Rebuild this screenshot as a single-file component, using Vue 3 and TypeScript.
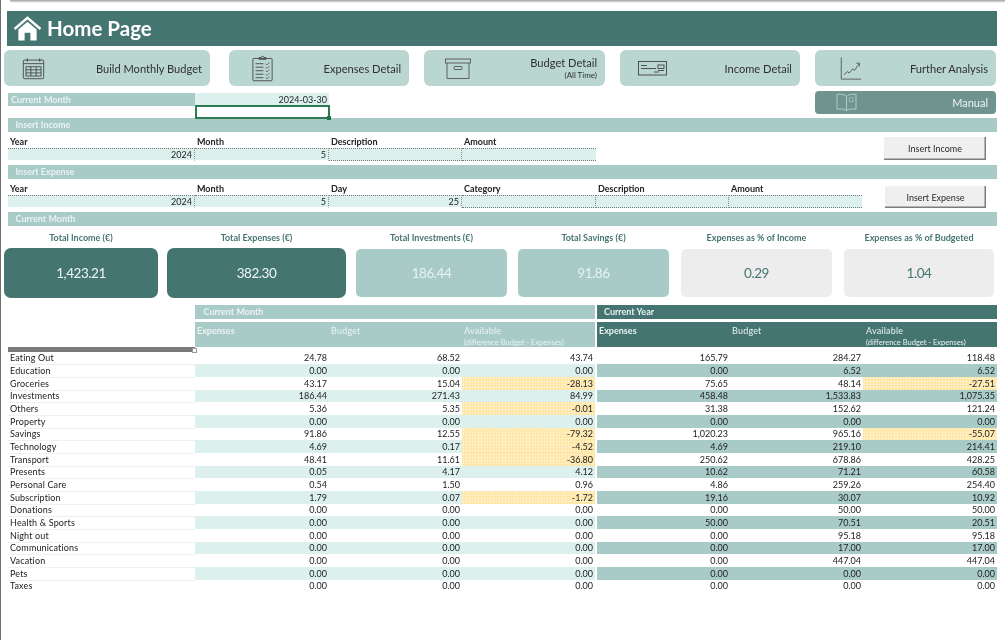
<script setup lang="ts">
interface Row { name: string; v: string[] }
const raw: [string, string][] = [
  ['Eating Out', '24.78 68.52 43.74 165.79 284.27 118.48'],
  ['Education', '0.00 0.00 0.00 0.00 6.52 6.52'],
  ['Groceries', '43.17 15.04 -28.13 75.65 48.14 -27.51'],
  ['Investments', '186.44 271.43 84.99 458.48 1,533.83 1,075.35'],
  ['Others', '5.36 5.35 -0.01 31.38 152.62 121.24'],
  ['Property', '0.00 0.00 0.00 0.00 0.00 0.00'],
  ['Savings', '91.86 12.55 -79.32 1,020.23 965.16 -55.07'],
  ['Technology', '4.69 0.17 -4.52 4.69 219.10 214.41'],
  ['Transport', '48.41 11.61 -36.80 250.62 678.86 428.25'],
  ['Presents', '0.05 4.17 4.12 10.62 71.21 60.58'],
  ['Personal Care', '0.54 1.50 0.96 4.86 259.26 254.40'],
  ['Subscription', '1.79 0.07 -1.72 19.16 30.07 10.92'],
  ['Donations', '0.00 0.00 0.00 0.00 50.00 50.00'],
  ['Health & Sports', '0.00 0.00 0.00 50.00 70.51 20.51'],
  ['Night out', '0.00 0.00 0.00 0.00 95.18 95.18'],
  ['Communications', '0.00 0.00 0.00 0.00 17.00 17.00'],
  ['Vacation', '0.00 0.00 0.00 0.00 447.04 447.04'],
  ['Pets', '0.00 0.00 0.00 0.00 0.00 0.00'],
  ['Taxes', '0.00 0.00 0.00 0.00 0.00 0.00'],
]
const rows: Row[] = raw.map(([name, s]) => ({ name, v: s.split(' ') }))

const kpis = [
  { label: 'Total Income (€)', value: '1,423.21', kind: 'dark', w: 154, gap: 9 },
  { label: 'Total Expenses (€)', value: '382.30', kind: 'dark', w: 179, gap: 10 },
  { label: 'Total Investments (€)', value: '186.44', kind: 'mid', w: 151, gap: 11 },
  { label: 'Total Savings (€)', value: '91.86', kind: 'mid', w: 151, gap: 12 },
  { label: 'Expenses as % of Income', value: '0.29', kind: 'grey', w: 151, gap: 12 },
  { label: 'Expenses as % of Budgeted', value: '1.04', kind: 'grey', w: 150, gap: 0 },
]

function cellClass(i: number, r: number, val: string): string[] {
  const c = ['num']
  if (i === 3) c.push('year-start')
  if (val.startsWith('-')) c.push('warn')
  else if (r % 2 === 1) c.push(i < 3 ? 'shade-light' : 'shade-mid')
  return c
}
</script>

<template>
  <div class="sheet">
    <header class="title">
      <svg class="house" viewBox="0 0 30 26" width="29" height="25">
        <path d="M1.500 13.500 15 2l13.500 11.500" fill="none" stroke="#fff" stroke-width="2.600" />
        <path d="M5.500 14 15 6l9.500 8v11.500h-6.500v-8h-6v8h-6.500z" fill="#fff" />
      </svg>
      <h1>Home Page</h1>
    </header>

    <nav class="nav">
      <div class="nbtn first">
        <svg class="ic" style="margin-left:18px" viewBox="0 0 26 26" width="23" height="23" fill="none" stroke="#444" stroke-width="1">
          <rect x="1.500" y="3.500" width="23" height="21" rx="1" />
          <path d="M1.500 7.500h23M6 1.500v4M20 1.500v4" />
          <rect x="4.500" y="11" width="17" height="10.500" />
          <path d="M4.500 14.500h17M4.500 18h17M10 11v10.500M16 11v10.500" />
        </svg>
        <span>Build Monthly Budget</span>
      </div>
      <div class="nbtn w180">
        <svg class="ic" style="margin-left:23px" viewBox="0 0 24 30" width="21" height="27" fill="none" stroke="#444" stroke-width="1">
          <rect x="1" y="3.500" width="22" height="25.500" rx="1" />
          <path d="M8 4.500V2.500h2.500a1.500 1.500 0 0 1 3 0H16v2z" />
          <path d="M4 9.500h9M4 13.500h9M4 17.500h9M4 21.500h9M4 25.500h9" />
          <path d="M15.500 9.500l1.500 1.500 3-3M15.500 13.500l1.500 1.500 3-3M15.500 17.500l1.500 1.500 3-3M15.500 21.500l1.500 1.500 3-3M15.500 25.500l1.500 1.500 3-3" stroke-width="0.800" />
        </svg>
        <span>Expenses Detail</span>
      </div>
      <div class="nbtn w181">
        <svg class="ic" style="margin-left:21px" viewBox="0 0 26 21" width="26" height="21" fill="none" stroke="#555" stroke-width="0.900">
          <rect x="0.500" y="1" width="25" height="4" />
          <path d="M2 5v15.500h22V5" />
          <rect x="9" y="8.500" width="8" height="3" rx="0.500" />
        </svg>
        <span class="two">Budget Detail<small>(All Time)</small></span>
      </div>
      <div class="nbtn w180">
        <svg class="ic" style="margin-left:18px" viewBox="0 0 29 15" width="29" height="15" fill="none" stroke="#444" stroke-width="0.900">
          <rect x="0.500" y="0.500" width="28" height="13.500" />
          <path d="M3 4.500h6M3 7.500h15" />
          <rect x="20" y="4" width="6" height="3.500" />
          <path d="M20 9.500h6M16 11h5" />
        </svg>
        <span>Income Detail</span>
      </div>
      <div class="nbtn w181">
        <svg class="ic" style="margin-left:25px" viewBox="0 0 24 26" width="22" height="23" fill="none" stroke="#444" stroke-width="0.900">
          <path d="M1 0.500V25h22.500" />
          <path d="M4 20l4-3.500 2 1.500 4-4.500 2 1.500 5-7" />
          <path d="M18 7h3.500v3.500" />
        </svg>
        <span>Further Analysis</span>
      </div>
    </nav>

    <section class="current">
      <div class="cur-left">
        <div class="cur-row">
          <div class="cur-label">Current Month</div>
          <div class="cur-value">2024-03-30</div>
        </div>
        <div class="cur-select"><i class="handle"></i></div>
      </div>
      <div class="manual">
        <svg class="ic" style="margin-left:20px" viewBox="0 0 24 20" width="23" height="19" fill="none" stroke="#b5ccc9" stroke-width="1">
          <path d="M12 3.500C9 1 5 1 2 1.500V17c3-.5 7-.5 10 1.500 3-2 7-2 10-1.500V1.500c-3-.5-7-.5-10 2zM12 3.500v15" />
          <path d="M15 5h4v4h-4z" stroke-width="0.700" />
        </svg>
        <span>Manual</span>
      </div>
    </section>

    <div class="bar">Insert Income</div>
    <section class="form income">
      <div class="fields f4">
        <b>Year</b><b>Month</b><b>Description</b><b>Amount</b>
        <div class="inp num">2024</div><div class="inp num">5</div><div class="inp"></div><div class="inp"></div>
      </div>
      <button class="sbtn b1">Insert Income</button>
    </section>

    <div class="bar">Insert Expense</div>
    <section class="form expense">
      <div class="fields f6">
        <b>Year</b><b>Month</b><b>Day</b><b>Category</b><b>Description</b><b>Amount</b>
        <div class="inp num">2024</div><div class="inp num">5</div><div class="inp num">25</div><div class="inp"></div><div class="inp"></div><div class="inp"></div>
      </div>
      <button class="sbtn b2">Insert Expense</button>
    </section>

    <div class="bar">Current Month</div>
    <section class="kpis">
      <div v-for="k in kpis" :key="k.label" class="kpi" :style="{ width: k.w + 'px', marginRight: k.gap + 'px' }">
        <div class="kpi-label">{{ k.label }}</div>
        <div class="kpi-card" :class="k.kind">{{ k.value }}</div>
      </div>
    </section>

    <section class="table">
      <div class="thead">
        <div class="band b-month">Current Month</div>
        <div class="band b-year">Current Year</div>
      </div>
      <div class="tsub">
        <div class="handlebar"><i></i></div>
        <div class="sub s-month">
          <b>Expenses</b><span class="hb">Budget</span>
          <span class="av">Available<small>(difference Budget - Expenses)</small></span>
        </div>
        <div class="sub s-year">
          <b>Expenses</b><span class="hb">Budget</span>
          <span class="av">Available<small>(difference Budget - Expenses)</small></span>
        </div>
      </div>
      <div class="tbody">
        <div v-for="(r, ri) in rows" :key="r.name" class="row">
          <div class="name">{{ r.name }}</div>
          <div v-for="(val, i) in r.v" :key="i" :class="cellClass(i, ri, val)"><span>{{ val }}</span></div>
        </div>
      </div>
    </section>
  </div>
</template>

<style>
html, body { margin: 0; background: #fff; }
</style>

<style scoped>
.sheet {
  box-sizing: border-box;
  width: 1005px;
  height: 640px;
  overflow: hidden;
  background: linear-gradient(#a0a0a0, #fff) 9px 0 / 100% 3px no-repeat #fff;
  border-left: 1px solid #6e6e6e;
  padding-top: 11px;
  font-family: Lato, "Liberation Sans", sans-serif;
  font-size: 9px;
  color: #222;
  filter: blur(0.3px);
}
.title {
  display: flex;
  align-items: center;
  height: 35px;
  margin: 0 8px 0 6px;
  background: #457570;
  color: #fff;
  padding-left: 5.500px;
}
.house { margin-top: -1px; }
.title h1 { margin: 0 0 0 5.500px; font-size: 20.500px; font-weight: 700; line-height: 1; }

.nav { display: flex; gap: 15px; margin: 4px 0 0 3px; }
.nbtn {
  display: flex;
  align-items: center;
  justify-content: space-between;
  box-sizing: border-box;
  height: 36px;
  padding-right: 8px;
  background: #bad6d1;
  border-radius: 6px;
  font-size: 11.100px;
  color: #303030;
}
.first { width: 206px; margin-right: 4px; }
.w180 { width: 180px; }
.w181 { width: 181px; }
.two { text-align: right; line-height: 12px; display: flex; flex-direction: column; padding-top: 2px; }
.two small { font-size: 8px; line-height: 12px; }
.ic { flex: none; }

.current { display: flex; height: 27px; margin-top: 5px; }
.cur-left { width: 329px; padding-left: 7px; padding-top: 1.500px; }
.cur-row { display: flex; height: 13.500px; line-height: 13.500px; }
.cur-label { width: 187px; background: #a9cbc8; color: #e9f3f2; font-weight: 700; padding-left: 3px; box-sizing: border-box; }
.cur-value { width: 134px; background: #dcf1ee; text-align: right; padding-right: 2px; box-sizing: border-box; }
.cur-select {
  position: relative;
  box-sizing: border-box;
  width: 135px;
  height: 14px;
  margin: -1px 0 0 187px;
  border: 2px solid #2c7a50;
}
.handle { position: absolute; right: -3px; bottom: -3px; width: 4px; height: 4px; background: #217346; }
.manual {
  display: flex;
  align-items: center;
  justify-content: space-between;
  box-sizing: border-box;
  width: 181px;
  height: 22.500px;
  margin: 0 0 0 478px;
  padding-right: 8px;
  background: #6f9490;
  border-radius: 4px;
  color: #edf3f2;
  font-size: 11px;
}

.bar {
  height: 13.500px;
  line-height: 13.500px;
  margin: 0 8px 0 6.500px;
  padding-left: 8px;
  background: #a9cbc8;
  color: #e9f3f2;
  font-weight: 700;
}

.form { display: flex; height: 33.500px; }
.fields { display: grid; margin: 4px 0 0 7px; grid-template-rows: 12.500px 13px; }
.f4 { grid-template-columns: 187px 134px 133px 134px; }
.f6 { grid-template-columns: 187px 134px 133px 134px 133px 133px; }
.fields b { padding-left: 2px; color: #222; font-weight: 700; line-height: 12.500px; }
.inp {
  box-sizing: border-box;
  background: #dcf1ee;
  border-top: 1px dotted #777;
  border-bottom: 1px dotted #777;
  border-right: 1px dotted #888;
  line-height: 11px;
  padding-right: 1px;
}
.inp:last-child { border-right: none; }
.fields .num { text-align: right; }
.sbtn {
  flex: none;
  box-sizing: border-box;
  padding: 0;
  border: none;
  background: #efefef;
  box-shadow: inset -1.500px -1.500px 0 #7d7d7d;
  color: #2b2b2b;
  font: 9px Lato, "Liberation Sans", sans-serif;
}
.b1 { width: 102px; height: 23px; margin: 5.500px 0 0 288px; }
.b2 { width: 101px; height: 22px; margin: 7.500px 0 0 23px; }

.kpis { display: flex; margin: 5px 0 0 3px; }
.kpi { flex: none; display: flex; flex-direction: column; align-items: center; }
.kpi-label { height: 18.500px; line-height: 13px; font-weight: 700; color: #457570; white-space: nowrap; }
.kpi-card {
  box-sizing: border-box;
  width: 100%;
  height: 48px;
  display: flex;
  align-items: center;
  justify-content: center;
  border-radius: 5px;
  font-size: 13.500px;
  letter-spacing: -0.450px;
}
.dark { height: 50px; margin-top: -1px; background: #457570; color: #eef5f4; border-radius: 7px; }
.mid { background: #a9cbc8; color: #e6f2f0; }
.grey { background: #ededed; color: #457570; }

.table { margin: 7px 0 0 7px; }
.thead { display: flex; margin-left: 187px; gap: 2px; }
.band {
  box-sizing: border-box;
  width: 400px;
  height: 13.500px;
  line-height: 13.500px;
  padding-left: 8.500px;
  font-weight: 700;
  color: #e9f3f2;
}
.b-month { background: #a9cbc8; }
.b-year { background: #457570; padding-left: 7px; }
.tsub { display: flex; margin-top: 3.500px; height: 30px; }
.handlebar { position: relative; width: 187px; height: 5px; margin-top: 24.500px; background: #7a7a7a; }
.handlebar i { position: absolute; right: -1.500px; top: 1px; width: 3px; height: 3px; background: #fff; border: 0.500px solid #999; }
.sub {
  box-sizing: border-box;
  display: grid;
  grid-template-columns: 134px 133px 133px;
  width: 400px;
  height: 25px;
  padding-top: 2.500px;
  color: #e9f3f2;
  line-height: 12px;
}
.sub b, .sub span { padding-left: 2px; font-weight: 700; }
.s-month { background: #a9cbc8; }
.s-year { background: #457570; margin-left: 2px; grid-template-columns: 133px 134px 133px; }
.sub .av { display: flex; flex-direction: column; font-weight: 400; letter-spacing: 0.200px; }
.sub .hb { font-weight: 400; letter-spacing: 0.200px; }
.sub small { font-size: 7.500px; line-height: 11px; letter-spacing: 0; white-space: nowrap; }

.row {
  display: grid;
  grid-template-columns: 187px 134px 133px 133px 135px 133px 134px;
  height: 13px;
  line-height: 13px;
}
.row:nth-child(3n + 1) { height: 12px; line-height: 12px; }
.name { box-sizing: border-box; padding-left: 2px; border-bottom: 1px solid #f0f0f0; letter-spacing: 0.150px; }
.row:last-child .name { border-bottom: none; }
.num { box-sizing: border-box; text-align: right; padding-right: 2px; border-bottom: 1px solid #fff; }
.year-start { margin-left: 2px; }
.shade-light { background: #dcf1ee; }
.shade-mid { background: #a9cbc8; }
.warn { background: radial-gradient(circle, #fff6df 0.8px, transparent 1.1px) 0 0 / 3px 3px #ffe6a4; }
</style>
